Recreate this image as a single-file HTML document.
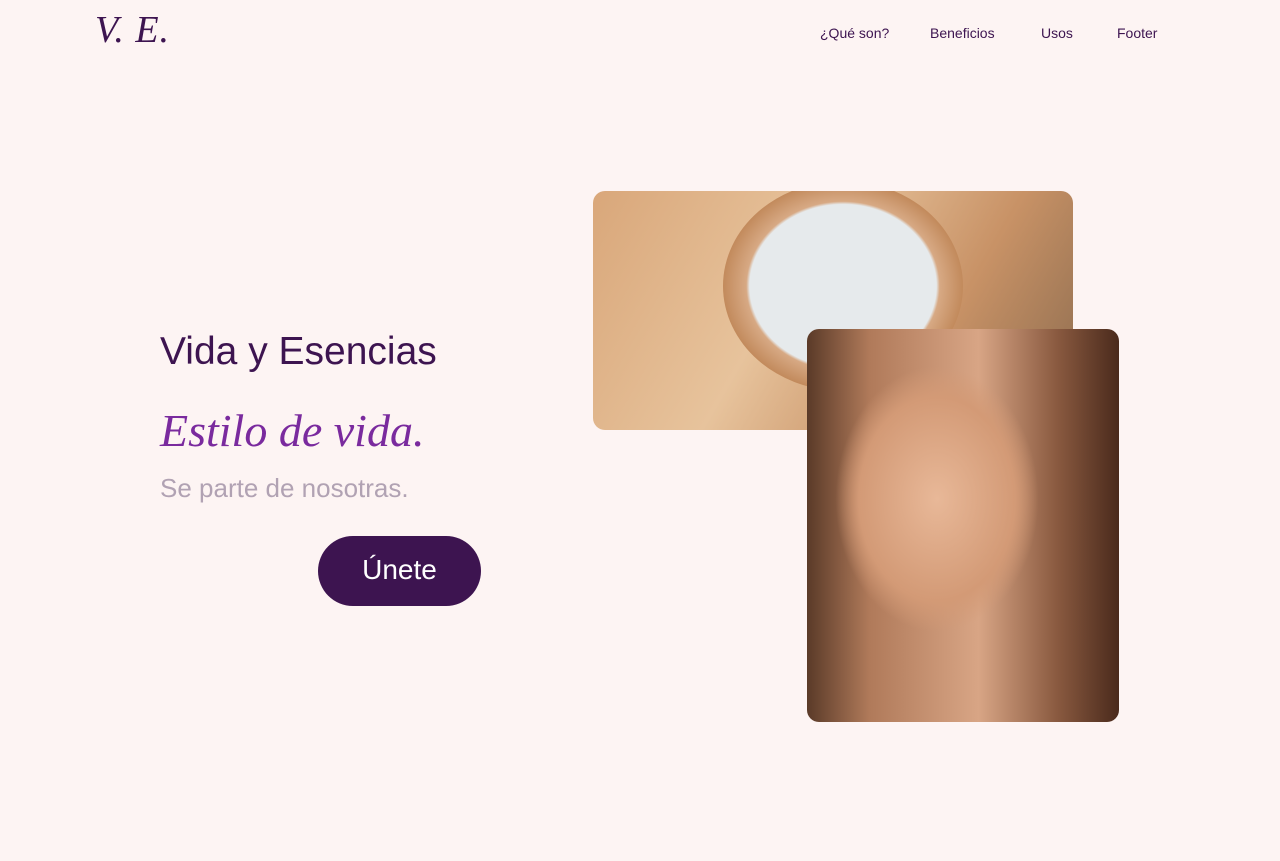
<!DOCTYPE html>
<html><head><meta charset="utf-8"><style>
*{margin:0;padding:0;box-sizing:border-box}
body{width:1280px;height:861px;background:#fdf4f3;font-family:"Liberation Sans",sans-serif;position:relative;overflow:hidden}
.logo{position:absolute;left:95px;top:8px;font-family:"Liberation Serif",serif;font-style:italic;font-size:38px;color:#3d1450;letter-spacing:1px}
nav a{position:absolute;top:25px;font-size:14px;color:#3d1450;text-decoration:none}
h1{position:absolute;left:160px;top:330px;font-weight:normal;font-size:39px;color:#3d1450}
.s{position:absolute;left:160px;top:404px;font-family:"Liberation Serif",serif;font-style:italic;font-size:46px;color:#7a2a9e}
.p{position:absolute;left:160px;top:473px;font-size:26px;color:#b1a2b3}
.btn{position:absolute;left:318px;top:536px;width:163px;height:70px;border-radius:35px;background:#3d1450;color:#fff;font-size:28px;text-align:center;line-height:68px}
.i1{position:absolute;left:593px;top:191px;width:480px;height:239px;border-radius:12px;overflow:hidden;
background:linear-gradient(120deg,#d9a77a,#e7c39c 40%,#c89266 70%,#8a6a4e)}
.i1 .b{position:absolute;left:130px;top:-10px;width:240px;height:210px;border-radius:50%;background:radial-gradient(ellipse,#e6eaec 0 55%,#d7a984 57%,#c08758 72%,transparent 74%);}
.i2{position:absolute;left:807px;top:329px;width:312px;height:393px;border-radius:12px;overflow:hidden;
background:radial-gradient(ellipse 130px 170px at 130px 170px,#e8b898,#d39a76 60%,transparent 78%),linear-gradient(90deg,#5a3a28,#b07a5a 20%,#d8a585 55%,#8a5a40 80%,#4a2a1c)}
</style></head><body>
<div class="logo">V. E.</div>
<nav><a style="left:820px">¿Qué son?</a><a style="left:930px">Beneficios</a><a style="left:1041px">Usos</a><a style="left:1117px">Footer</a></nav>
<h1>Vida y Esencias</h1>
<div class="s">Estilo de vida.</div>
<div class="p">Se parte de nosotras.</div>
<div class="btn">Únete</div>
<div class="i1"><div class="b"></div></div>
<div class="i2"></div>
</body></html>
